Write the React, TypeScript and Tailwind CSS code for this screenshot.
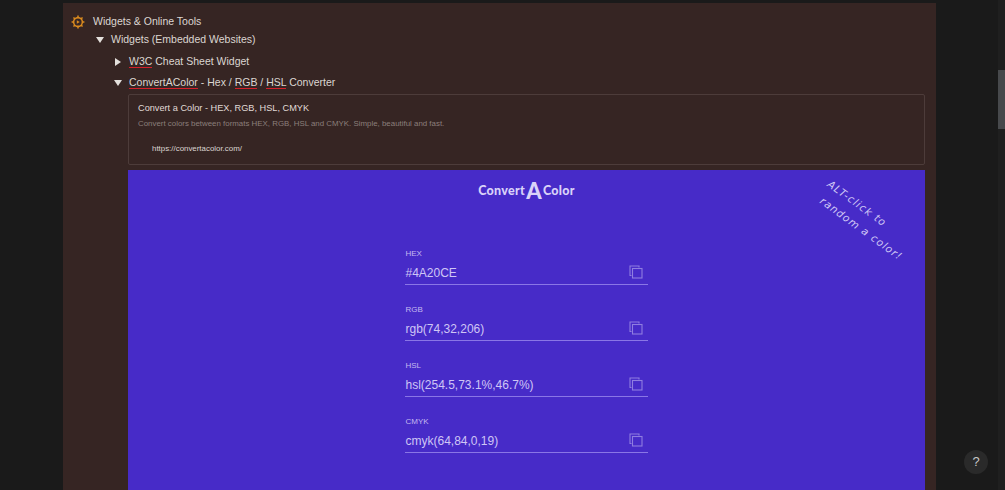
const F = "[font-family:'Liberation_Sans',Arial,sans-serif]";

function Squiggle({ children }: { children: React.ReactNode }) {
  return <span className="border-b border-[#d4202a]">{children}</span>;
}

function CopyIcon() {
  return (
    <svg width="14" height="14" viewBox="0 0 14 14" fill="none" stroke="#8f7de0" strokeWidth="1.1" className="mb-[1px]">
      <path d="M2.5 10.5H1V1h9v1.5" />
      <rect x="3.5" y="3.5" width="9.5" height="9.5" />
    </svg>
  );
}

function Field({ label, value }: { label: string; value: string }) {
  return (
    <div className="w-[243px] h-[56px]">
      <div className="pl-[1px] text-[8px] leading-[12px] text-[#c3b8f0]">{label}</div>
      <div className="h-[25px] flex items-center justify-between border-b border-[#8a76e6] pr-[5px] pl-[1px]">
        <span className="text-[12px] pt-[1px] text-[#cfc6f5]">{value}</span>
        <CopyIcon />
      </div>
    </div>
  );
}

function Gear() {
  return (
    <svg width="14" height="14" viewBox="0 0 24 24" fill="none" stroke="#d98a1f" strokeWidth="2.6" className="shrink-0">
      <circle cx="12" cy="12" r="7.5" />
      <path d="M12 1v4M12 19v4M1 12h4M19 12h4M4.2 4.2l2.8 2.8M17 17l2.8 2.8M4.2 19.8 7 17M17 7l2.8-2.8" />
      <path d="M10 9l5 3-5 3z" fill="#d98a1f" stroke="none" />
    </svg>
  );
}

function TreeRow({ open, indent, h, children }: { open: boolean; indent: string; h: string; children: React.ReactNode }) {
  return (
    <div className={`flex items-center text-[10.5px] text-[#dcd6d2] ${indent} ${h}`}>
      <span className="w-[15px] shrink-0 flex">
        {open ? (
          <span className="w-0 h-0 border-l-[4px] border-r-[4px] border-t-[6.5px] border-l-transparent border-r-transparent border-t-[#e4e0dc]" />
        ) : (
          <span className="ml-[1px] w-0 h-0 border-t-[4px] border-b-[4px] border-l-[6.5px] border-t-transparent border-b-transparent border-l-[#e4e0dc]" />
        )}
      </span>
      <span>{children}</span>
    </div>
  );
}

export default function App() {
  return (
    <div className={`relative h-[490px] overflow-hidden bg-[#1a1a1a] ${F}`}>
      <div className="flex h-full">
        <div className="ml-[63px] mt-[3px] w-[873px] bg-[#362523] pl-[8px] pr-[11px] pt-[9px]">
          <div className="flex items-center gap-[8px] h-[19px] text-[10.5px] text-[#dcd6d2]">
            <Gear />
            <span>Widgets &amp; Online Tools</span>
          </div>
          <TreeRow open indent="pl-[25px]" h="h-[18px]">Widgets (Embedded Websites)</TreeRow>
          <TreeRow open={false} indent="pl-[43px] mt-[2px]" h="h-[21px]"><Squiggle>W3C</Squiggle> Cheat Sheet Widget</TreeRow>
          <TreeRow open indent="pl-[43px]" h="h-[21px]">
            <Squiggle>ConvertAColor</Squiggle> - Hex / <Squiggle>RGB</Squiggle> / <Squiggle>HSL</Squiggle> Converter
          </TreeRow>
          <div className="ml-[57px] mt-[1px] h-[71px] rounded-[2px] border border-[#4d3c3a] pl-[9px] pt-[7px]">
            <div className="text-[9.2px] leading-[13px] text-[#e0dbd7]">Convert a Color - HEX, RGB, HSL, CMYK</div>
            <div className="mt-[3px] text-[7.9px] leading-[12px] text-[#8b7f7b]">Convert colors between formats HEX, RGB, HSL and CMYK. Simple, beautiful and fast.</div>
            <div className="mt-[13px] ml-[14px] text-[7.9px] leading-[12px] text-[#dcd6d2]">https://convertacolor.com/</div>
          </div>
          <div className="relative ml-[57px] mt-[5px] h-[320px] bg-[#472bc8] flex flex-col items-center">
            <div className="mt-[11px] h-[20px] flex items-center gap-[1px] font-['Lato',sans-serif] font-black text-[#d9d2f8] text-[12.5px] tracking-[0.3px]">
              <span>Convert</span>
              <span className="text-[22px] leading-[20px]">A</span>
              <span>Color</span>
            </div>
            <div className="mt-[47px] flex flex-col -ml-[1px]">
              <Field label="HEX" value="#4A20CE" />
              <Field label="RGB" value="rgb(74,32,206)" />
              <Field label="HSL" value="hsl(254.5,73.1%,46.7%)" />
              <Field label="CMYK" value="cmyk(64,84,0,19)" />
            </div>
            <div className="absolute left-[685px] top-[34px] w-[110px] rotate-[36deg] origin-center font-['DejaVu_Sans',sans-serif] italic font-extralight text-[10.5px] leading-[18px] tracking-[1px] text-[#cfc6f5]">
              ALT-click to<br /><span className="ml-[4px]">random a color!</span>
            </div>
          </div>
        </div>
        <div className="ml-auto mr-0 w-[7px] h-full bg-[#1f1f1f] relative">
          <div className="absolute left-0 right-0 top-[70px] h-[59px] bg-[#47494c]" />
        </div>
      </div>
      <div className="absolute left-[964px] top-[450px] w-[24px] h-[24px] rounded-full bg-[#2a2a2a] flex items-center justify-center text-[13px] text-[#c8c8c8]">?</div>
    </div>
  );
}
